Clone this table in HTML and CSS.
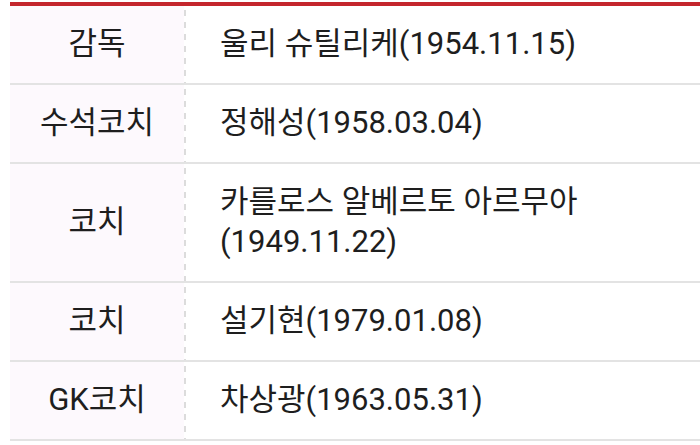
FILE: index.html
```html
<!DOCTYPE html>
<html lang="ko">
<head>
<meta charset="utf-8">
<link rel="stylesheet" href="styles.css">
</head>
<body>
<div class="staff">
  <div class="row"><div class="role">감독</div><div class="name">울리 슈틸리케(1954.11.15)</div></div>
  <div class="row"><div class="role">수석코치</div><div class="name">정해성(1958.03.04)</div></div>
  <div class="row"><div class="role">코치</div><div class="name">카를로스 알베르토 아르무아<br>(1949.11.22)</div></div>
  <div class="row"><div class="role">코치</div><div class="name">설기현(1979.01.08)</div></div>
  <div class="row"><div class="role">GK코치</div><div class="name">차상광(1963.05.31)</div></div>
</div>
</body>
</html>
```
FILE: styles.css
```css
html, body {
  margin: 0;
  padding: 0;
  background: #ffffff;
}
.staff {
  margin: 2px 0 0 10px;
  border-top: 4px solid #c4262d;
  font-family: Roboto, "Noto Sans CJK KR", sans-serif;
  font-size: 31px;
  line-height: 40px;
  color: #1e1e1e;
}
.row {
  display: flex;
  border-bottom: 2px solid #e3e3e3;
}
.role {
  width: 174px;
  flex: none;
  background: #fdf9fd;
  text-align: center;
  display: flex;
  align-items: center;
  justify-content: center;
  padding: 18px 0 19px;
}
.name {
  flex: 1;
  padding: 18px 0 19px 36px;
  background-image: repeating-linear-gradient(to bottom, #dcdcdc 0 6px, transparent 6px 12px);
  background-size: 2px 100%;
  background-repeat: no-repeat;
  background-position: 0 4px;
}
```
